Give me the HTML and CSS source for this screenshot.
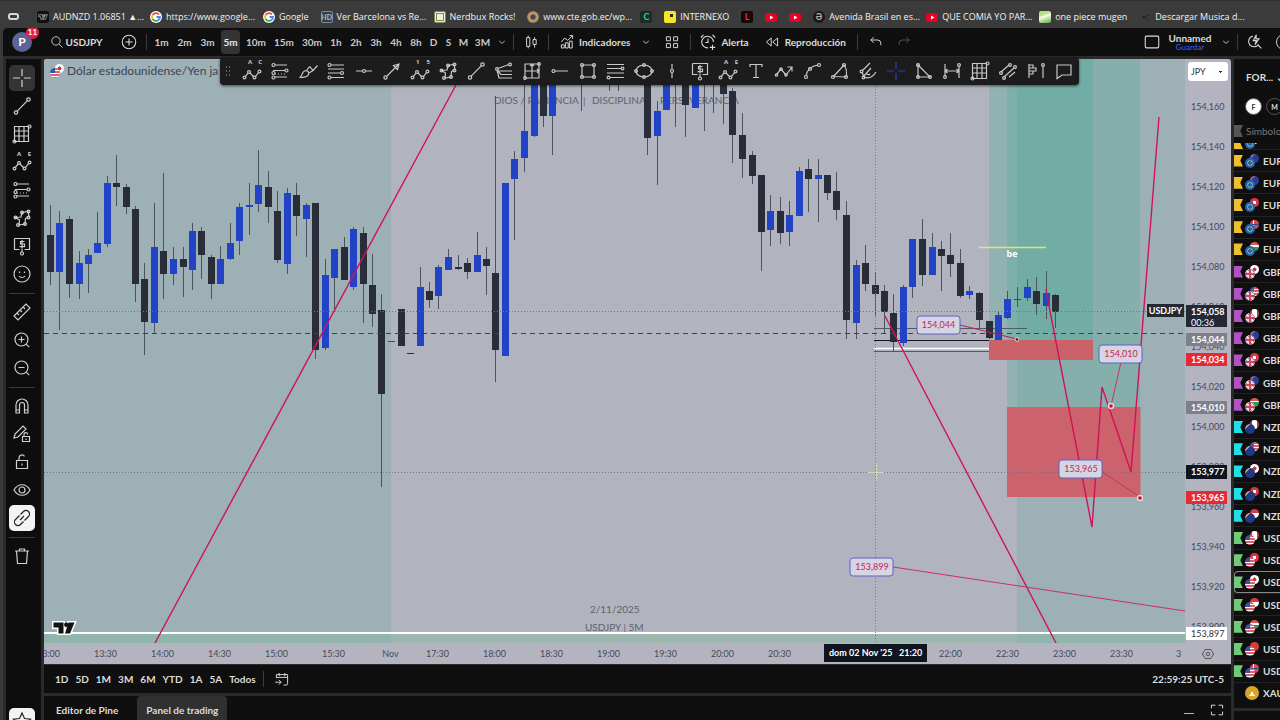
FILE: index.html
```html
<!DOCTYPE html>
<html lang="es">
<head>
<meta charset="utf-8">
<title>USDJPY</title>
<link rel="stylesheet" href="styles.css">
</head>
<body>
<svg class="defs" aria-hidden="true">
  <defs>
    <symbol id="i-cross" viewBox="0 0 20 20"><path d="M10 1v7M10 12v7M1 10h7M12 10h7"/></symbol>
    <symbol id="i-trend" viewBox="0 0 20 20"><circle cx="4" cy="16.500" r="1.700"/><circle cx="16.500" cy="3.500" r="1.700"/><path d="M5.200 15.200L15.200 4.800"/></symbol>
    <symbol id="i-grid" viewBox="0 0 20 20"><path d="M2.500 2.500h14v15h-14zM7 2.500v15M12 2.500v15M2.500 7h14M2.500 12h14"/><circle cx="17.500" cy="2.500" r="1.500"/><circle cx="2.500" cy="17.500" r="1.500"/></symbol>
    <symbol id="i-wave" viewBox="0 0 20 20"><circle cx="2.500" cy="16.500" r="1.400"/><circle cx="7" cy="11" r="1.400"/><circle cx="12.500" cy="16.500" r="1.400"/><circle cx="17.500" cy="10.500" r="1.400"/><path d="M3.400 15.400L6 12.200M8 12l3.500 3.500M13.500 15.500l3-3.800"/></symbol>
    <symbol id="i-fib" viewBox="0 0 20 20"><path d="M5 4h12M3 9.500h12M5 16h12" /><path d="M5 13h10" stroke-dasharray="1 2"/><circle cx="3.500" cy="4" r="1.500"/><circle cx="16.500" cy="9.500" r="1.500"/><circle cx="3.500" cy="12" r="1.500"/><circle cx="3.500" cy="16.500" r="1.500"/></symbol>
    <symbol id="i-fib2" viewBox="0 0 20 20"><path d="M5 4h13M2 8h16M2 12h12M5 16.500h13"/><circle cx="3.500" cy="4" r="1.500"/><circle cx="16" cy="12" r="1.500"/><circle cx="3.500" cy="16.500" r="1.500"/></symbol>
    <symbol id="i-shape" viewBox="0 0 20 20"><path d="M3.500 9.500L9 9l1-4.500 6-1 1 5-3.500 2-.500 5.500-6 1 .500-5z"/><circle cx="3.500" cy="9.500" r="1.400"/><circle cx="10" cy="4.500" r="1.400"/><circle cx="16.500" cy="3.500" r="1.400"/><circle cx="16.500" cy="9.500" r="1.400"/><circle cx="6" cy="17" r="1.400"/><circle cx="13" cy="16" r="1.400"/></symbol>
    <symbol id="i-price" viewBox="0 0 20 20"><path d="M2.500 2.500h15v11h-5M2.500 2.500v11h5M12.500 5.500h-4v2.500h4v2.700h-5M10 4v8.500M10 13v3"/><circle cx="10" cy="17.500" r="1.500"/></symbol>
    <symbol id="i-smile" viewBox="0 0 20 20"><circle cx="10" cy="10" r="8"/><path d="M7.500 7.500v1.500M12.500 7.500v1.500M7 12c1.500 2 4.500 2 6 0"/></symbol>
    <symbol id="i-ruler" viewBox="0 0 20 20"><path d="M2 14L14 2l4 4L6 18zM5 11l2 2M8 8l2 2M11 5l2 2"/></symbol>
    <symbol id="i-zoomin" viewBox="0 0 20 20"><circle cx="9.500" cy="9.500" r="6.500"/><path d="M14.200 14.200l3 3M6.500 9.500h6M9.500 6.500v6"/></symbol>
    <symbol id="i-zoomout" viewBox="0 0 20 20"><circle cx="9.500" cy="9.500" r="6.500"/><path d="M14.200 14.200l3 3M6.500 9.500h6"/></symbol>
    <symbol id="i-magnet" viewBox="0 0 20 20"><path d="M4 17V9a6 6 0 0 1 12 0v8h-3.500V9a2.500 2.500 0 0 0-5 0v8zM4 14h3.500M12.500 14H16"/></symbol>
    <symbol id="i-penlock" viewBox="0 0 20 20"><path d="M2 14l1-4 8-8 3 3-8 8zM10.500 12.500h7v5h-7zM12 12.500v-2a1.800 1.800 0 0 1 3.600 0M14 14.500v1.500"/></symbol>
    <symbol id="i-lock" viewBox="0 0 20 20"><path d="M4.500 8.500h11v8h-11zM7 8.500V6a3 3 0 0 1 5.500-1.700M10 11.500v2"/></symbol>
    <symbol id="i-eye" viewBox="0 0 20 20"><path d="M2 10c4-7 12-7 16 0-4 7-12 7-16 0z"/><circle cx="10" cy="10" r="3"/></symbol>
    <symbol id="i-link" viewBox="0 0 20 20"><path d="M8 12l4-4M8.500 6.500l3-3a3.200 3.200 0 0 1 5 5l-4 4M11.500 13.500l-3 3a3.200 3.200 0 0 1-5-5l4-4"/></symbol>
    <symbol id="i-trash" viewBox="0 0 20 20"><path d="M3 5h14M7.500 5V3h5v2M4.500 5l1 12.500h9l1-12.500"/></symbol>
    <symbol id="i-star" viewBox="0 0 20 20"><path d="M10 2l2.500 5.500 6 .700-4.500 4 1.300 6L10 15l-5.300 3.200 1.300-6-4.500-4 6-.700z"/></symbol>
    <symbol id="i-brush" viewBox="0 0 20 20"><path d="M1.500 16.500c3-1 2-5 5-6.500 3-1 5 1 4 3.500-1 2.500-4 3-9 3zM9 9l2.500-3.500M13 7l2 2.500 4.500-5M11.500 5.500l1.500 1.500M11 12l4-2.500"/></symbol>
    <symbol id="i-hline" viewBox="0 0 20 20"><path d="M2 10h6.500M11.500 10H18"/><circle cx="10" cy="10" r="1.500"/></symbol>
    <symbol id="i-arrow" viewBox="0 0 20 20"><circle cx="3.500" cy="16.500" r="1.600"/><path d="M5 15L17 3M11.500 4.500L17 3l-1.500 5.500z"/></symbol>
    <symbol id="i-fan" viewBox="0 0 20 20"><path d="M4 7.500l11-4M3.500 10H18M3 9l4 4.500h11M3 9l2 8h13"/><circle cx="3" cy="8" r="1.400"/><circle cx="16" cy="3.500" r="1.400"/></symbol>
    <symbol id="i-box" viewBox="0 0 20 20"><path d="M3 3h14v14H3zM3 10h14M10 3v14M8 5l2-2 2 2M15 8l2 2-2 2"/><circle cx="17" cy="3" r="1.300"/><circle cx="3" cy="17" r="1.300"/></symbol>
    <symbol id="i-ray" viewBox="0 0 20 20"><path d="M5 10h13"/><circle cx="3.500" cy="10" r="1.500"/></symbol>
    <symbol id="i-rect" viewBox="0 0 20 20"><path d="M4 4h12v12H4z"/><circle cx="4" cy="4" r="1.500"/><circle cx="16" cy="4" r="1.500"/><circle cx="4" cy="16" r="1.500"/><circle cx="16" cy="16" r="1.500"/></symbol>
    <symbol id="i-lines" viewBox="0 0 20 20"><path d="M1 3.500h17M1 7.500h14M1 12h17M4 16.500h14"/><circle cx="16.500" cy="7.500" r="1.400"/><circle cx="2.500" cy="16.500" r="1.400"/></symbol>
    <symbol id="i-ellipse" viewBox="0 0 20 20"><ellipse cx="10" cy="10" rx="8" ry="6"/><circle cx="2" cy="10" r="1.400"/><circle cx="18" cy="10" r="1.400"/><circle cx="10" cy="4" r="1.400"/><circle cx="10" cy="16" r="1.400"/></symbol>
    <symbol id="i-vline" viewBox="0 0 20 20"><path d="M10 3v5.500M10 11.500V17"/><circle cx="10" cy="10" r="1.500"/></symbol>
    <symbol id="i-text" viewBox="0 0 20 20"><path d="M4 6V3.500h12V6M10 3.500v13M7 16.500h6"/></symbol>
    <symbol id="i-path" viewBox="0 0 20 20"><path d="M2.500 13.500L7 8l5 6 6-8M13.500 6H18v4.500"/><circle cx="2.500" cy="14" r="1.200"/><circle cx="7" cy="8" r="1.200"/><circle cx="12" cy="14" r="1.200"/></symbol>
    <symbol id="i-arc" viewBox="0 0 20 20"><path d="M4 15C5 9 9 5 16 4"/><circle cx="4" cy="16" r="1.500"/><circle cx="8" cy="8" r="1.500"/><circle cx="17" cy="4" r="1.500"/></symbol>
    <symbol id="i-wedge" viewBox="0 0 20 20"><path d="M3.500 15.500L14 4c3 4 3 8 2 12z"/><circle cx="3" cy="16" r="1.500"/><circle cx="14" cy="4" r="1.500"/><circle cx="16" cy="16" r="1.500"/></symbol>
    <symbol id="i-pitch" viewBox="0 0 20 20"><path d="M4 10L12 2M5 16L13 7M4 11l2 5c5 2 9 0 12-5M8 12c1 2 3 2 4 1"/><circle cx="5.500" cy="16.500" r="1.400"/><circle cx="3.500" cy="10.500" r="1.400"/></symbol>
    <symbol id="i-tri" viewBox="0 0 20 20"><path d="M4 4v12h12z"/><circle cx="4" cy="4" r="1.400"/><circle cx="4" cy="16" r="1.400"/><circle cx="16" cy="16" r="1.400"/></symbol>
    <symbol id="i-range" viewBox="0 0 20 20"><path d="M3 3v12M17 5v12M3 10h14M5.500 8L3 10l2.500 2M14.500 8L17 10l-2.500 2"/><circle cx="17" cy="4" r="1.400"/><circle cx="3" cy="16" r="1.400"/></symbol>
    <symbol id="i-chan" viewBox="0 0 20 20"><path d="M3 11l8-7M6 16L16 7M11 16l6-5"/><circle cx="3" cy="12" r="1.400"/><circle cx="12" cy="4" r="1.400"/><circle cx="6" cy="17" r="1.400"/><circle cx="17" cy="6" r="1.400"/></symbol>
    <symbol id="i-vol" viewBox="0 0 20 20"><path d="M3 3v14M3 4h4v3H3M3 7h7v3H3M3 10h4v3H3M17 5v12"/><circle cx="17" cy="4" r="1.400"/></symbol>
    <symbol id="i-note" viewBox="0 0 20 20"><path d="M3 4h14v10H8l-5 3.500z"/></symbol>
    <symbol id="i-search" viewBox="0 0 20 20"><circle cx="8.500" cy="8.500" r="6"/><path d="M13 13l5 5"/></symbol>
    <symbol id="i-plus" viewBox="0 0 20 20"><circle cx="10" cy="10" r="7.500"/><path d="M10 6v8M6 10h8"/></symbol>
    <symbol id="i-down" viewBox="0 0 20 20"><path d="M6 8.500l4 3.500 4-3.500"/></symbol>
    <symbol id="i-candle" viewBox="0 0 20 20"><path d="M4.500 4.500h4v11h-4zM6.500 2v2.500M6.500 15.500V18M12.500 7h4v6h-4zM14.500 4v3M14.500 13v4"/></symbol>
    <symbol id="i-indic" viewBox="0 0 20 20"><path d="M3 10l4-5 4 3 6-6M13 2h4v4M3 17.500v-4h3.500v4zM8 17.500V11h3.500v6.500zM13 17.500V9h3.500v8.500z"/></symbol>
    <symbol id="i-tiles" viewBox="0 0 20 20"><path d="M3 3.500h5v5H3zM12 3.500h5v5h-5zM3 12h5v5H3zM12 12h5v5h-5z"/></symbol>
    <symbol id="i-alarm" viewBox="0 0 20 20"><path d="M16 10a6.500 6.500 0 1 0-6 6.500M10 6v4.500H7M2 5l3-3M18 5l-3-3M15 13v6M12 16h6"/></symbol>
    <symbol id="i-rewind" viewBox="0 0 20 20"><path d="M9 5v10L3 10zM17 5v10l-6-5z"/></symbol>
    <symbol id="i-undo" viewBox="0 0 20 20"><path d="M7 4L3.500 7.500 7 11M3.500 7.500H12a4 4 0 0 1 4 4V14"/></symbol>
    <symbol id="i-redo" viewBox="0 0 20 20"><path d="M13 4l3.500 3.500L13 11M16.500 7.500H8a4 4 0 0 0-4 4V14"/></symbol>
    <symbol id="i-square" viewBox="0 0 20 20"><rect x="2.500" y="3.500" width="15" height="13" rx="1.500"/></symbol>
    <symbol id="i-quick" viewBox="0 0 20 20"><path d="M7.500 3.500a6 6 0 1 0 6.500 9M13.500 13.500l3.500 3.500M11.500 2L8 8.500h3.500L10 13l4.500-6.500H11z"/></symbol>
    <symbol id="i-cal" viewBox="0 0 20 20"><path d="M3 9V4.500h14V16a1.500 1.500 0 0 1-1.500 1.500H12M3 8h14M6.500 2.500v4M13.500 2.500v4M1.500 14h7M6 11l3 3-3 3"/></symbol>
    <symbol id="i-hex" viewBox="0 0 20 20"><path d="M6 3.500h8l4 6.500-4 6.500H6L2 10z"/><circle cx="10" cy="10" r="2.500"/></symbol>
    <symbol id="i-max" viewBox="0 0 20 20"><path d="M3 8V4h5M12 4h5v4M17 12v4h-5M8 16H3v-4"/></symbol>
    <symbol id="i-min" viewBox="0 0 20 20"><path d="M3 15h14"/></symbol>
    <symbol id="i-google" viewBox="0 0 12 12"><circle cx="6" cy="6" r="6" fill="#fff" stroke="none"/><path d="M9 3.500A4 4 0 0 0 2.600 4" stroke="#ea4335" stroke-width="1.800"/><path d="M2.600 4a4 4 0 0 0 0 4" stroke="#fbbc05" stroke-width="1.800"/><path d="M2.600 8A4 4 0 0 0 8.500 9" stroke="#34a853" stroke-width="1.800"/><path d="M8.500 9A4 4 0 0 0 10 6H6.500" stroke="#4285f4" stroke-width="1.800"/></symbol>
    <symbol id="i-yt" viewBox="0 0 12 12"><rect y="2" width="12" height="9" rx="2.500" fill="#e60023" stroke="none"/><path d="M5 4.500l3.500 2L5 8.500z" fill="#fff" stroke="none"/></symbol>
    <symbol id="i-tv" viewBox="0 0 24 14"><path d="M1.500 1.500h10v11h-5v-6h-5zM16.500 1.500h6l-4.500 11h-5z"/><circle cx="14.300" cy="3.700" r="2.200"/></symbol>
  </defs>
</svg>

<nav class="bookmarks" aria-label="Marcadores">
  <span class="bm-panel"></span>
  <a class="bm wide" href="#"><span class="fav fav-tv"><svg class="tv-mini"><use href="#i-tv"/></svg></span>AUDNZD 1.06851 ▲...</a>
  <a class="bm wide" href="#"><svg class="fav"><use href="#i-google"/></svg>https://www.google...</a>
  <a class="bm" href="#"><svg class="fav"><use href="#i-google"/></svg>Google</a>
  <a class="bm wide" href="#"><span class="fav fav-b">HD</span>Ver Barcelona vs Re...</a>
  <a class="bm" href="#"><span class="fav fav-n"></span>Nerdbux Rocks!</a>
  <a class="bm wide" href="#"><span class="fav fav-w"></span>www.cte.gob.ec/wp...</a>
  <a class="bm only" href="#" aria-label="C"><span class="fav fav-c">C</span></a>
  <a class="bm" href="#"><span class="fav fav-i"></span>INTERNEXO</a>
  <a class="bm only" href="#" aria-label="L"><span class="fav fav-l">L</span></a>
  <a class="bm only" href="#" aria-label="YouTube"><svg class="fav"><use href="#i-yt"/></svg></a>
  <a class="bm only" href="#" aria-label="YouTube"><svg class="fav"><use href="#i-yt"/></svg></a>
  <a class="bm wide" href="#"><span class="fav fav-a">Ə</span>Avenida Brasil en es...</a>
  <a class="bm wide" href="#"><svg class="fav"><use href="#i-yt"/></svg>QUE COMIA YO PAR...</a>
  <a class="bm" href="#"><span class="fav fav-o"></span>one piece mugen</a>
  <a class="bm wide" href="#"><span class="fav fav-d">◦:</span>Descargar Musica d...</a>
</nav>

<div class="app">
  <header class="topbar">
    <button class="avatar" aria-label="Perfil">P<span class="badge">11</span></button>
    <button class="symbol"><svg class="ic14"><use href="#i-search"/></svg>USDJPY</button>
    <button class="slot34" aria-label="Comparar"><svg class="ic18"><use href="#i-plus"/></svg></button>
    <i class="vsep"></i>
    <div class="frames">
      <button class="w23">1m</button><button class="w23">2m</button><button class="w23">3m</button><button class="w23 on">5m</button><button class="w28">10m</button><button class="w28">15m</button><button class="w28">30m</button><button class="w20">1h</button><button class="w20">2h</button><button class="w20">3h</button><button class="w20">4h</button><button class="w20">8h</button><button class="w15">D</button><button class="w15">S</button><button class="w15">M</button><button class="w23">3M</button><button class="w15" aria-label="Más intervalos"><svg class="ic14"><use href="#i-down"/></svg></button>
    </div>
    <i class="vsep"></i>
    <button class="slot34" aria-label="Velas"><svg class="ic16"><use href="#i-candle"/></svg></button>
    <i class="vsep"></i>
    <button class="tool indic"><svg class="ic16"><use href="#i-indic"/></svg>Indicadores</button>
    <button class="w28" aria-label="Favoritos"><svg class="ic14"><use href="#i-down"/></svg></button>
    <button class="w20" aria-label="Plantillas"><svg class="ic16"><use href="#i-tiles"/></svg></button>
    <i class="vsep gap"></i>
    <button class="tool alert"><svg class="ic18"><use href="#i-alarm"/></svg>Alerta</button>
    <button class="tool replay"><svg class="ic16"><use href="#i-rewind"/></svg>Reproducción</button>
    <i class="vsep gap"></i>
    <button class="w28" aria-label="Deshacer"><svg class="ic16"><use href="#i-undo"/></svg></button>
    <button class="w28 dim" aria-label="Rehacer"><svg class="ic16"><use href="#i-redo"/></svg></button>
    <span class="spacer"></span>
    <button class="w28" aria-label="Diseño"><svg class="ic18"><use href="#i-square"/></svg></button>
    <button class="layout-name">Unnamed<small>Guardar</small></button>
    <button class="w23" aria-label="Diseños"><svg class="ic14"><use href="#i-down"/></svg></button>
    <i class="vsep"></i>
    <button class="w28 quick" aria-label="Búsqueda rápida"><svg class="ic18"><use href="#i-quick"/></svg></button>
    <button class="gear" aria-label="Configuración"></button>
  </header>

  <div class="work">
    <aside class="tools">
      <button class="on" aria-label="Cruz"><svg><use href="#i-cross"/></svg></button>
      <button aria-label="Tendencia"><svg><use href="#i-trend"/></svg></button>
      <button aria-label="Rejilla"><svg><use href="#i-grid"/></svg></button>
      <button class="lettered" aria-label="Patrones"><svg><use href="#i-wave"/></svg><span><i>A</i><i>E</i></span></button>
      <button aria-label="Posición"><svg><use href="#i-fib"/></svg></button>
      <button aria-label="Formas"><svg><use href="#i-shape"/></svg></button>
      <button aria-label="Nota de precio"><svg><use href="#i-price"/></svg></button>
      <button aria-label="Iconos"><svg><use href="#i-smile"/></svg></button>
      <hr>
      <button aria-label="Medir"><svg><use href="#i-ruler"/></svg></button>
      <button aria-label="Acercar"><svg><use href="#i-zoomin"/></svg></button>
      <button aria-label="Alejar"><svg><use href="#i-zoomout"/></svg></button>
      <hr>
      <button aria-label="Imán"><svg><use href="#i-magnet"/></svg></button>
      <button aria-label="Modo dibujo"><svg><use href="#i-penlock"/></svg></button>
      <button aria-label="Bloquear"><svg><use href="#i-lock"/></svg></button>
      <button aria-label="Ocultar"><svg><use href="#i-eye"/></svg></button>
      <button class="lit" aria-label="Vincular"><svg><use href="#i-link"/></svg></button>
      <hr>
      <button aria-label="Eliminar"><svg><use href="#i-trash"/></svg></button>
      <button class="lit last" aria-label="Favoritos"><svg><use href="#i-star"/></svg></button>
    </aside>

    <main class="center">
      <section class="chart">
        <div class="plot">
          <svg class="canvas" viewBox="44 59 1141 584" preserveAspectRatio="xMinYMin slice" role="img" aria-label="Gráfico USDJPY">
            <rect x="44" y="59" width="2000" height="1000" fill="#b1b4be"/>
            <rect x="44" y="59" width="347" height="584" fill="#9db0b5"/>
            <rect x="1017" y="59" width="1000" height="584" fill="#9db0b5"/>
            <rect x="1007" y="59" width="133" height="348" fill="#3dab93" opacity=".24"/>
            <rect x="989" y="59" width="104" height="281" fill="#3dab93" opacity=".27"/>
            <rect x="44" y="634" width="2000" height="9" fill="#7cbf9a" opacity=".35"/>
            <g class="marks">
              <text x="494" y="104">DIOS / PACIENCIA</text><text x="583" y="104">|</text><text x="592" y="104">DISCIPLINA</text><text x="649" y="104">|</text><text x="660" y="104">PERSEVERANCIA</text>
              <text x="590" y="613">2/11/2025</text><text x="585" y="631">USDJPY | 5M</text>
            </g>
            <path d="M44 633H2000" stroke="#fff" stroke-width="2"/>
            <path d="M874 328.500h153M874 351.500h153" stroke="#555a66"/>
            <path d="M874 340.500h153" stroke="#15171f"/>
            <path d="M874 348.500h153" stroke="#fff" stroke-width="1.500"/>
            <g id="candles"></g>
            <rect x="989" y="340" width="104" height="20" fill="#cb626a"/>
            <rect x="1007" y="407" width="133.500" height="90" fill="#cb626c"/>
            <path d="M979 247.500h67" stroke="#e0e676" stroke-width="1.300"/>
            <text x="1012" y="257" class="be">be</text>
            <path d="M44 311.500h1500M44 472.500h1500M875.500 59v600" stroke="#6d7682" stroke-dasharray="1 2"/>
            <path d="M44 333.500h1500" stroke="#39424e" stroke-dasharray="5 4"/>
            <path d="M868 472.500h16M876.500 464v16" stroke="#d5d6bd"/>
            <path d="M960 325l57 14" stroke="#c2185b"/><circle cx="1017" cy="339.500" r="1.800" fill="#222" stroke="#ddd"/>
            <g fill="none" stroke="#d0125b" stroke-width="1.400">
              <path d="M155 643L456 85M885 316L1056 643M1046 289L1050 311 1092 527 1102 387 1131 472 1159 117"/>
            </g>
            <path d="M893 567L1185 611M1121 362L1111 406M1101 471L1140 497" stroke="#c93260" fill="none"/>
            <circle class="pin" cx="1111" cy="406" r="2.500"/><circle class="pin" cx="1140" cy="498" r="2.500"/>
            <g class="notes">
              <rect x="917" y="316" width="43" height="18" rx="3"/><text x="938.500" y="328">154,044</text>
              <rect x="1099" y="345" width="43" height="18" rx="3"/><text x="1121" y="357">154,010</text>
              <rect x="1059" y="460" width="43" height="18" rx="3"/><text x="1081" y="472">153,965</text>
              <rect x="850" y="558" width="43" height="18" rx="3"/><text x="872" y="570">153,899</text>
            </g>
            <g transform="translate(52 621)"><path d="M1.500 1.500h10v11h-5v-6h-5zM16.500 1.500h6l-4.500 11h-5z" fill="#111" stroke="#fff" stroke-width="3" paint-order="stroke"/><circle cx="14.300" cy="3.700" r="2.200" fill="#111"/></g>
          </svg>
          <h1 class="legend"><span class="pair us-jp"></span>Dólar estadounidense/Yen ja</h1>
          <span class="sym-tag">USDJPY</span>
        </div>
        <div class="prices">
          <select class="currency" aria-label="Divisa"><option>JPY</option></select>
          <span>154,160</span><span>154,140</span><span>154,120</span><span>154,100</span><span>154,080</span><span>154,060</span><span>154,040</span><span>154,020</span><span>154,000</span><span>153,980</span><span>153,960</span><span>153,940</span><span>153,920</span><span>153,900</span>
          <b class="tag now">154,058<em>00:36</em></b>
          <b class="tag t044">154,044</b>
          <b class="tag t034">154,034</b>
          <b class="tag t010">154,010</b>
          <b class="tag t977">153,977</b>
          <b class="tag t965">153,965</b>
          <b class="tag t897">153,897</b>
        </div>
        <div class="times">
          <span>13:00</span><span>13:30</span><span>14:00</span><span>14:30</span><span>15:00</span><span>15:30</span><span class="day">Nov</span><span>17:30</span><span>18:00</span><span>18:30</span><span>19:00</span><span>19:30</span><span>20:00</span><span>20:30</span><span></span><span></span><span>22:00</span><span>22:30</span><span>23:00</span><span>23:30</span><span>3</span>
          <b class="when">dom 02 Nov '25 &nbsp; 21:20</b>
        </div>
        <button class="axis-set" aria-label="Ajustes de escala"><svg class="ic14"><use href="#i-hex"/></svg></button>
      </section>

      <div class="ranges">
        <button>1D</button><button>5D</button><button>1M</button><button>3M</button><button>6M</button><button>YTD</button><button>1A</button><button>5A</button><button>Todos</button>
        <i class="vsep"></i>
        <button class="cal" aria-label="Ir a"><svg class="ic16"><use href="#i-cal"/></svg></button>
        <span class="spacer"></span>
        <button>22:59:25 UTC-5</button>
      </div>
      <div class="tabs">
        <button>Editor de Pine</button><button class="on">Panel de trading</button>
        <span class="spacer"></span>
        <button class="w28" aria-label="Minimizar"><svg class="ic14"><use href="#i-min"/></svg></button>
        <button class="w28" aria-label="Maximizar"><svg class="ic16"><use href="#i-max"/></svg></button>
      </div>

      <div class="favbar">
        <span class="grip"></span>
        <button class="lettered"><svg><use href="#i-wave"/></svg><span><i>A</i><i>C</i></span></button>
        <button><svg><use href="#i-fib"/></svg></button>
        <button><svg><use href="#i-brush"/></svg></button>
        <button><svg><use href="#i-fib2"/></svg></button>
        <button><svg><use href="#i-hline"/></svg></button>
        <button class="solid"><svg><use href="#i-arrow"/></svg></button>
        <button class="lettered"><svg><use href="#i-wave"/></svg><span><i>1</i><i>5</i></span></button>
        <button><svg><use href="#i-shape"/></svg></button>
        <button><svg><use href="#i-trend"/></svg></button>
        <button><svg><use href="#i-fan"/></svg></button>
        <button><svg><use href="#i-box"/></svg></button>
        <button><svg><use href="#i-ray"/></svg></button>
        <button><svg><use href="#i-rect"/></svg></button>
        <button><svg><use href="#i-lines"/></svg></button>
        <button><svg><use href="#i-ellipse"/></svg></button>
        <button><svg><use href="#i-vline"/></svg></button>
        <button><svg><use href="#i-price"/></svg></button>
        <button class="lettered"><svg><use href="#i-wave"/></svg><span><i>A</i><i>E</i></span></button>
        <button><svg><use href="#i-text"/></svg></button>
        <button><svg><use href="#i-path"/></svg></button>
        <button><svg><use href="#i-arc"/></svg></button>
        <button><svg><use href="#i-wedge"/></svg></button>
        <button><svg><use href="#i-pitch"/></svg></button>
        <button class="blue"><svg><use href="#i-cross"/></svg></button>
        <button><svg><use href="#i-tri"/></svg></button>
        <button><svg><use href="#i-range"/></svg></button>
        <button><svg><use href="#i-grid"/></svg></button>
        <button><svg><use href="#i-chan"/></svg></button>
        <button><svg><use href="#i-vol"/></svg></button>
        <button><svg><use href="#i-note"/></svg></button>
      </div>
    </main>

    <aside class="watch">
      <button class="list-name">FOR... ⌄</button>
      <div class="chips"><button class="chip on">F</button><button class="chip">M</button></div>
      <div class="cols"><i class="flag grey"></i>Símbolo</div>
      <ul class="rows" id="rows"></ul>
      <div class="below"></div>
    </aside>
  </div>
</div>
<script src="app.js"></script>
</body>
</html>
```

FILE: styles.css
```css
* { box-sizing: border-box; }
body {
  margin: 0;
  height: 100vh;
  overflow: hidden;
  display: flex;
  flex-direction: column;
  background: #393939;
  color: #dcdcdc;
  font: 10px/14px Lato, "Open Sans", sans-serif;
}
button {
  display: flex;
  align-items: center;
  justify-content: center;
  flex: none;
  padding: 0;
  border: 0;
  background: none;
  color: inherit;
  font: inherit;
  white-space: nowrap;
}
svg { flex: none; }
.defs { position: absolute; width: 0; height: 0; }
symbol, use { fill: none; stroke: currentColor; stroke-width: 1.2; }
.ic14 { width: 14px; height: 14px; }
.ic16 { width: 16px; height: 16px; }
.ic18 { width: 18px; height: 18px; }
.spacer { flex: 1; }
.vsep { flex: none; width: 1px; height: 16px; background: #3c3c3c; }
.gap { margin-left: 8px; }
.w15 { width: 15px; }
.w20 { width: 20px; }
.w23 { width: 23px; }
.w28 { width: 28px; }
.slot34 { width: 34px; }

/* bookmarks */
.bookmarks {
  flex: none;
  display: flex;
  align-items: center;
  height: 28px;
  padding: 4px 0 0 8px;
  overflow: hidden;
  border-top: 1px solid #303030;
  background: #3b3b3b;
  font: 500 9px/12px "Open Sans", sans-serif;
}
.bm-panel { flex: none; width: 11px; height: 7px; margin-right: 18px; border: 2px solid #d8d8d8; border-radius: 3px; }
.bm { display: flex; align-items: center; gap: 4px; flex: none; padding-right: 12px; color: #f2f2f2; text-decoration: none; white-space: nowrap; }
.wide { width: 113px; padding: 0; overflow: hidden; }
.only { width: 24px; padding: 0; }
.fav { flex: none; display: flex; align-items: center; justify-content: center; width: 12px; height: 12px; border-radius: 2px; font: 700 9px/12px Lato, sans-serif; }
.fav-tv { background: #111; }
.tv-mini { width: 10px; height: 6px; }
.tv-mini use { fill: #fff; stroke: none; }
.fav-b { border: 1px solid #6d8fb5; color: #9dc3ea; font-size: 7px; }
.fav-n { border: 3px double #7a8a52; background: #eef0dc; }
.fav-w { border-radius: 50%; background: radial-gradient(#3b4660 20%, #c9a56a 45%, #6b3a32); }
.fav-c { background: #1f2a28; color: #19d3a2; }
.fav-i { border: 3px solid #f6e71d; border-left-width: 6px; border-bottom-width: 6px; background: #222; }
.fav-l { background: #140808; color: #e0392f; }
.fav-a { border-radius: 50%; background: #191919; color: #aaa; }
.fav-o { background: linear-gradient(160deg, #b9dd8d 30%, #f4ffe8 45%, #5ea53a); }
.fav-d { color: #151515; }

/* top toolbar */
.app { flex: 1; display: flex; flex-direction: column; min-height: 0; margin-left: 3px; border-radius: 5px 0 0 0; overflow: hidden; background: #2b2b2b; }
.topbar { flex: none; display: flex; align-items: center; height: 28px; background: #0f0f0f; font-weight: 700; overflow: hidden; }
.avatar { position: relative; width: 20px; height: 20px; margin-left: 9px; border-radius: 50%; background: #5b6397; color: #fff; font-size: 12px; }
.badge { position: absolute; top: -6px; right: -7px; min-width: 13px; height: 13px; border-radius: 7px; background: #e2203f; font-size: 8px; line-height: 13px; }
.symbol { gap: 2px; margin-left: 17px; width: 54px; margin-right: 9px; }
.frames { display: flex; margin-left: 3px; margin-right: 4px; }
.frames button { height: 24px; border-radius: 4px; color: #c9c9c9; }
.frames .on { width: 19px; margin: 0 2px; background: #343434; color: #e8e8e8; }
.tool { gap: 4px; }
.indic { margin-left: 10px; }
.alert { margin-left: 8px; }
.replay { margin-left: 15px; gap: 5px; }
.replay + .gap { margin-right: 4px; margin-left: 11px; }
.indic + .w28 { width: 32px; }
.dim { color: #555; }
.layout-name { flex-direction: column; width: 48px; line-height: 10px; }
.layout-name small { color: #3f5cff; font-size: 8px; line-height: 8px; font-weight: 400; }
.quick { margin-left: 3px; }
.gear { width: 16px; height: 16px; margin: 0 -12px 0 7px; border: 1px solid #ccc; border-radius: 50%; }

/* work area */
.work { flex: 1; display: flex; min-height: 0; gap: 3px; padding: 3px 0 0 3px; }
.tools { flex: none; display: flex; flex-direction: column; align-items: center; width: 35px; padding: 5px 3px 0 0; background: #0d0d0d; overflow: hidden; }
.tools button { width: 26px; height: 26px; margin: 1px 0; border-radius: 5px; color: #cfcfcf; }
.tools svg { width: 20px; height: 20px; }
.tools hr { width: 26px; height: 1px; margin: 5px 0 4px; border: 0; background: #3a3a3a; flex: none; }
.tools .on { background: #343434; }
.tools .lit { background: #f3f3f3; color: #222; }
.tools .last { margin: auto 0 -14px; }
.lettered { position: relative; }
.lettered span { position: absolute; top: 1px; right: 4px; display: flex; justify-content: space-between; width: 14px; font: 700 6px/8px "Open Sans", sans-serif; }
.lettered i { font-style: normal; }

.center { position: relative; flex: 1; min-width: 0; display: flex; flex-direction: column; }
.chart { flex: 1; min-height: 0; display: grid; grid-template: minmax(0, 1fr) 21px / minmax(0, 1fr) 46px; background: #b4b4c1; color: #454a57; font-size: 9px; border-radius: 3px 3px 0 0; overflow: hidden; }
.plot { position: relative; overflow: hidden; }
.canvas { display: block; width: 100%; height: 100%; }
.marks { fill: #5e636f; font: 10px Lato, sans-serif; }
.be { fill: #fff; font: 700 9px "Open Sans", sans-serif; text-anchor: middle; }
.notes rect { fill: #d5d5e3; stroke: #5c63c4; }
.notes text { fill: #c8234f; font: 9px Lato, sans-serif; text-anchor: middle; }
.pin { fill: #c4102f; stroke: #f4d5da; stroke-width: 1.4; }
.up { fill: #2343c6; }
.down { fill: #292d39; }
.wick { stroke: #4b535e; }
.legend { position: absolute; top: 5px; left: 6px; display: flex; align-items: center; gap: 3px; margin: 0; color: #3a4450; font: 12px/14px Lato, sans-serif; white-space: nowrap; }
.sym-tag { position: absolute; right: 1px; top: 42%; height: 13px; padding: 0 2px; background: #242832; color: #fff; font-weight: 700; line-height: 13px; }

.prices { position: relative; display: flex; flex-direction: column; padding-top: 28px; overflow: hidden; }
.prices > span { flex: none; height: 40px; padding-left: 6px; line-height: 40px; }
.currency { appearance: none; position: absolute; top: 3px; left: 3px; width: 40px; height: 19px; padding: 0 0 0 3px; border: 0; border-radius: 3px; background: linear-gradient(45deg, transparent 50%, #333 50%) 31px 9px / 2px 2px no-repeat, linear-gradient(-45deg, transparent 50%, #333 50%) 33px 9px / 2px 2px no-repeat, #fff; color: #333; font: 9px Lato, sans-serif; }
.tag { position: absolute; left: 1px; width: 41px; height: 13px; padding-left: 5px; color: #fff; line-height: 13px; }
.tag em { display: block; font-style: normal; font-weight: 400; line-height: 9px; }
.now { top: 246px; height: 22px; background: #242832; }
.t044 { top: 274px; background: #7d808a; }
.t034 { top: 294px; background: #e52a35; }
.t010 { top: 342px; background: #7d808a; }
.t977 { top: 406px; height: 14px; background: #10141f; }
.t965 { top: 432px; background: #e52a35; }
.t897 { top: 568px; background: #fff; color: #333; font-weight: 400; }

.times { position: relative; display: flex; overflow: hidden; }
.times > span { flex: none; width: 57px; text-align: center; line-height: 21px; }
.times > span:first-child { margin-left: -24px; }
.times .day { margin-right: -10px; }
.when { position: absolute; left: 780px; top: 1px; padding: 0 5px; height: 18px; background: #10141f; color: #fff; line-height: 18px; white-space: nowrap; }
.axis-set { color: #444; }

.ranges { flex: none; display: flex; align-items: center; gap: 7px; height: 28px; margin-top: 1px; padding: 0 7px 0 11px; background: #0f0f0f; font-weight: 700; }
.ranges .cal { margin-left: 3px; }
.tabs { flex: none; display: flex; align-items: stretch; height: 24px; margin-top: 3px; padding-left: 4px; background: #0f0f0f; font-weight: 700; overflow: hidden; }
.tabs button { padding-top: 4px; }
.tabs button:not(.w28) { padding: 4px 8px 0; }
.tabs .on:not(.w28) { margin-left: 11px; padding: 4px 9px 0; border-radius: 4px 4px 0 0; background: #303030; }

.favbar { position: absolute; left: 176px; top: -2px; display: flex; align-items: center; height: 28px; padding-right: 1px; border-radius: 4px; background: #1c1c1c; color: #c8c8c8; box-shadow: 0 1px 3px #0009; }
.favbar button { width: 28px; height: 28px; }
.favbar svg { width: 20px; height: 20px; }
.grip { width: 6px; height: 12px; margin: 0 7px 0 5px; background: radial-gradient(circle, #666 1px, transparent 1px) 0 0 / 3px 4px; }
.solid use { fill: currentColor; }
.blue { color: #3a3fb8; }

/* watch list */
.watch { flex: none; display: flex; flex-direction: column; width: 46px; overflow: hidden; background: #0f0f0f; }
.list-name { justify-content: flex-start; height: 36px; padding-left: 12px; font-weight: 700; }
.chips { display: flex; gap: 4px; height: 24px; padding: 3px 0 0 11px; }
.chip { width: 17px; height: 17px; border: 1px solid #555; border-radius: 50%; font-size: 7px; font-weight: 700; }
.chip.on { background: #fff; color: #333; }
.cols { display: flex; align-items: center; gap: 3px; height: 24px; color: #777; }
.rows { flex: 1; min-height: 0; display: flex; flex-direction: column; margin: 0; padding: 0; list-style: none; overflow: hidden; font-weight: 700; }
.rows li { flex: 1 1 22px; min-height: 0; display: flex; align-items: center; border-top: 1px solid #222; }
.rows li:first-child { flex: 0 0 6px; align-items: flex-end; overflow: hidden; border: 0; }
.rows .sel { border-top-color: #888; box-shadow: inset 1px 0 #888, inset 0 -1px #888; border-radius: 4px 0 0 4px; }
.flag { flex: none; width: 9px; height: 12px; clip-path: polygon(0 0, 100% 0, 70% 50%, 100% 100%, 0 100%); }
.grey { background: #555; }
.yellow { background: #f0bf2f; }
.purple { background: #b252c4; }
.cyan { background: #1fe0e8; }
.green { background: #6fcb78; }
.pair { position: relative; flex: none; width: 14px; height: 14px; margin: 0 4px 0 2px; }
.legend .pair { margin: 0; }
.pair::before, .pair::after { content: ""; position: absolute; border-radius: 50%; width: 9px; height: 9px; }
.pair::before { right: 0; top: 0; background: var(--back, radial-gradient(#d5323f 30%, #fff 35%)); }
.pair::after { left: 0; bottom: 0; width: 10px; height: 10px; background: var(--front, linear-gradient(90deg, #3456a8 50%, transparent 50%) 0 0 / 100% 50% no-repeat, repeating-linear-gradient(#e0606a 0 2px, #fff 2px 3px)); }
.eur { --front: radial-gradient(circle, #2563b8 25%, #9fb878 30%, #2563b8 50%); }
.gbp { --front: linear-gradient(#d6455a, #d6455a) 50% 50% / 100% 2px no-repeat, linear-gradient(90deg, transparent 40%, #d6455a 40% 60%, transparent 60%), repeating-linear-gradient(45deg, #e9dce6 0 2px, #8a86b4 2px 3px); }
.nzd { --front: linear-gradient(135deg, #d5909f 25%, #1f3b87 30%); }
.b-nz { --back: linear-gradient(135deg, #9f668f 25%, #253f90 35%); }
.b-ca { --back: linear-gradient(90deg, #d9333f 25%, #fff 25% 75%, #d9333f 75%); }
.b-ch { --back: radial-gradient(#fff 25%, #dc3545 30%); }
.b-no { --back: linear-gradient(transparent 40%, #2b4a98 40% 60%, transparent 60%), linear-gradient(90deg, #d94855 30%, #fff 30% 45%, #d94855 45%); }
.b-za { --back: linear-gradient(#d85a50 33%, #fff 33% 50%, #2f965c 50%); }
.b-us { --back: linear-gradient(90deg, #4060a8 50%, transparent 50%) 0 0 / 100% 50% no-repeat, repeating-linear-gradient(#e0606a 0 2px, #fff 2px 3px); }
.b-sg { --back: linear-gradient(#db3b48 50%, #fff 50%); }
.b-cn { --back: #d83a3e; }
.gold { flex: none; width: 14px; height: 14px; margin: 0 4px 0 2px; border-radius: 50%; background: conic-gradient(from 150deg at 50% 0%, #fff6d8 60deg, transparent 60deg) 50% 50% / 8px 5px no-repeat, #d6a52c; }
.below { flex: none; height: 12px; margin-top: 4px; border-top: 3px solid #2b2b2b; }
```

FILE: app.js
```js
// Candles: centre x, high, body top, body bottom, low, rising
const candles = [
  [50,205,235,272,285,0],[59,211,223,272,330,1],[69,216,219,284,298,0],[79,251,263,284,299,1],[88,249,255,264,293,1],
  [97,212,243,253,253,1],[107,176,183,244,247,1],[116,155,183,187,206,0],[126,184,187,207,214,0],[135,206,209,284,302,0],
  [144,263,279,322,355,0],[154,203,247,323,334,1],[163,173,251,274,299,0],[173,247,259,274,285,1],[183,247,259,267,297,0],
  [192,223,231,270,290,1],[201,227,231,255,279,0],[211,255,257,284,299,0],[220,246,259,284,284,1],[230,223,243,259,260,1],
  [239,203,207,241,255,1],[249,183,205,207,235,1],[258,150,185,204,212,1],[268,171,187,207,223,0],[277,191,211,260,263,0],
  [287,188,193,264,274,1],[296,183,195,216,236,0],[306,203,205,219,257,1],[315,203,203,350,359,0],[325,259,275,348,350,1],
  [334,249,249,278,311,1],[344,237,247,280,280,0],[353,227,229,287,290,1],[363,227,233,284,323,0],[372,254,285,314,327,0],
  [381,294,310,394,487,0],[391,341,341,342,342,1],[401,309,309,346,346,0],[410,353,353,354,354,0],[420,267,287,346,346,1],
  [429,282,291,300,308,0],[438,265,267,296,309,1],[448,249,257,270,270,1],[458,255,267,269,270,0],[467,258,263,272,279,0],
  [477,232,255,272,272,1],[486,247,259,266,295,0],[495,96,273,350,382,0],[505,183,183,356,356,1],[514,151,159,179,240,1],
  [524,85,131,158,172,1],[534,60,60,136,137,1],[543,60,60,116,127,0],[552,60,60,116,155,1],[581,60,60,61,111,0],
  [609,60,60,61,91,0],[618,60,60,61,91,0],[647,60,60,138,155,0],[657,101,111,136,185,1],[666,60,60,110,110,1],
  [675,60,60,61,127,0],[685,60,60,105,137,0],[695,60,60,108,108,1],[704,60,60,61,131,0],[713,60,60,61,113,0],
  [723,60,60,94,124,0],[732,88,91,135,163,0],[742,113,135,159,178,0],[752,151,155,176,184,0],[761,175,175,232,271,0],
  [770,195,211,230,246,1],[780,197,211,233,244,0],[789,201,215,232,246,1],[799,167,171,216,216,1],[808,159,169,179,212,0],
  [818,159,175,179,222,1],[827,175,175,193,200,0],[836,172,191,210,220,0],[846,201,215,320,339,0],[856,260,265,323,339,1],
  [865,245,263,284,291,0],[875,272,285,294,316,0],[884,285,291,312,334,0],[893,294,313,342,351,0],[903,285,287,343,346,1],
  [912,239,239,287,298,1],[922,219,239,275,286,0],[932,233,247,275,275,1],[941,241,249,256,291,0],[950,233,255,264,277,0],
  [960,249,263,296,298,0],[969,286,291,295,299,1],[979,292,293,320,328,0],[989,321,321,338,339,0],[998,311,315,340,341,1],
  [1007,291,299,318,319,1],[1017,287,299,300,307,1],[1027,279,287,298,301,1],[1036,277,291,304,315,0],[1046,271,293,306,319,1],
  [1055,294,295,312,328,0]
];
document.getElementById('candles').innerHTML = candles.map(([x, h, t, b, l, up]) =>
  `<path class="wick" d="M${x + .5} ${h}V${l}"/><rect class="${up ? 'up' : 'down'}" x="${x - 3}" y="${t}" width="7" height="${b - t}"/>`
).join('');

// Watch list: symbol, flag colour, front flag, back flag
const rows = [
  ['', 'yellow', 'eur', 'b-us'],
  ['EUR', 'yellow', 'eur', 'b-nz'], ['EUR', 'yellow', 'eur', 'b-nz'], ['EUR', 'yellow', 'eur', 'b-ch'],
  ['EUR', 'yellow', 'eur', 'b-no'], ['EUR', 'yellow', 'eur', 'b-za'],
  ['GBP', 'purple', 'gbp', ''], ['GBP', 'purple', 'gbp', 'b-us'], ['GBP', 'purple', 'gbp', 'b-ca'],
  ['GBP', 'purple', 'gbp', 'b-nz'], ['GBP', 'purple', 'gbp', 'b-ch'], ['GBP', 'purple', 'gbp', 'b-nz'], ['GBP', 'purple', 'gbp', 'b-za'],
  ['NZD', 'cyan', 'nzd', 'b-ca'], ['NZD', 'cyan', 'nzd', 'b-us'], ['NZD', 'cyan', 'nzd', ''],
  ['NZD', 'cyan', 'nzd', 'b-ch'], ['NZD', 'cyan', 'nzd', 'b-sg'],
  ['USD', 'green', '', 'b-ca'], ['USD', 'green', '', 'b-ch'], ['USD', 'green', '', ''],
  ['USD', 'green', '', 'b-sg'], ['USD', 'green', '', 'b-za'], ['USD', 'green', '', 'b-cn'], ['USD', 'green', '', 'b-no']
];
document.getElementById('rows').innerHTML = rows.map(([s, c, f, b], i) =>
  `<li class="${i === 20 ? 'sel' : ''}"><i class="flag ${c}"></i><span class="pair ${f} ${b}"></span>${s}</li>`
).join('') + '<li><i class="flag"></i><span class="gold"></span>XAU</li>';
```
